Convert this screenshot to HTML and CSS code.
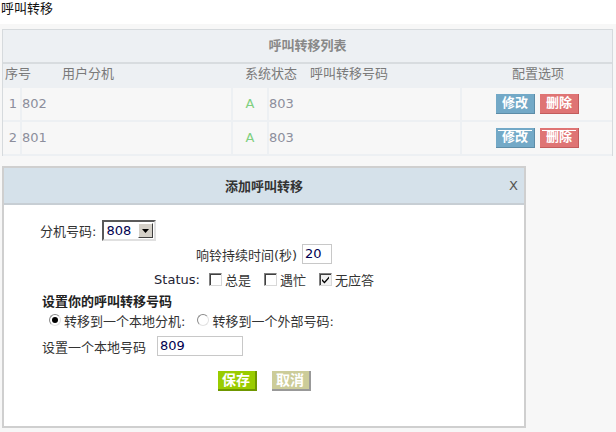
FILE: index.html
```html
<!DOCTYPE html>
<html>
<head>
<meta charset="utf-8">
<title>呼叫转移</title>
<link rel="stylesheet" href="styles.css">
</head>
<body>
<div class="page-title">呼叫转移</div>
<div class="main">
  <div class="list">
    <div class="list-title">呼叫转移列表</div>
    <div class="list-head">
      <span class="h-idx">序号</span>
      <span class="h-ext">用户分机</span>
      <span class="h-st">系统状态</span>
      <span class="h-num">呼叫转移号码</span>
      <span class="h-opt">配置选项</span>
    </div>
    <div class="row">
      <div class="c c-idx">1</div>
      <div class="c c-ext">802</div>
      <div class="c c-st">A</div>
      <div class="c c-num">803</div>
      <div class="c c-opt"><span class="btn btn-edit">修改</span><span class="btn btn-del">删除</span></div>
    </div>
    <div class="row row-alt">
      <div class="c c-idx">2</div>
      <div class="c c-ext">801</div>
      <div class="c c-st">A</div>
      <div class="c c-num">803</div>
      <div class="c c-opt"><span class="btn btn-edit">修改</span><span class="btn btn-del">删除</span></div>
    </div>
  </div>

  <div class="dialog">
    <div class="dlg-head">
      <span class="dlg-title">添加呼叫转移</span>
      <span class="dlg-close">X</span>
    </div>
    <div class="dlg-body">
      <div class="f-row f-ext">
        <span class="lbl">分机号码:</span>
        <span class="select"><span class="sel-val">808</span><span class="sel-btn"><svg width="7" height="4" viewBox="0 0 7 4"><path d="M0 0H7L3.5 4Z" fill="#000"/></svg></span></span>
      </div>
      <div class="f-row f-center f-ring">
        <span class="lbl">响铃持续时间(秒)</span>
        <span class="input in-ring">20</span>
      </div>
      <div class="f-row f-center f-status">
        <span class="lbl">Status:</span>
        <span class="cb"></span><span class="cb-lbl">总是</span>
        <span class="cb"></span><span class="cb-lbl">遇忙</span>
        <span class="cb checked"><svg width="9" height="9" viewBox="0 0 9 9"><path d="M1 4L3.5 6.5L8 1.5V3.5L3.5 8.5L1 6Z" fill="#000"/></svg></span><span class="cb-lbl">无应答</span>
      </div>
      <div class="f-row f-heading">设置你的呼叫转移号码</div>
      <div class="f-row f-radio">
        <span class="rd on"></span><span class="rd-lbl">转移到一个本地分机:</span>
        <span class="rd"></span><span class="rd-lbl">转移到一个外部号码:</span>
      </div>
      <div class="f-row f-local">
        <span class="lbl">设置一个本地号码</span>
        <span class="input in-local">809</span>
      </div>
      <div class="f-row f-center f-btns">
        <span class="sbtn save">保存</span>
        <span class="sbtn cancel">取消</span>
      </div>
    </div>
  </div>
</div>
</body>
</html>
```

FILE: styles.css
```css
html, body {
  margin: 0;
  padding: 0;
  background: #f7f7f7;
}
body {
  font-family: "DejaVu Sans", "Noto Sans CJK SC", sans-serif;
  font-size: 13px;
  color: #333;
  height: 432px;
  overflow: hidden;
}
.page-title {
  background: #fff;
  height: 24px;
  line-height: 18px;
  padding-left: 1px;
  color: #111;
}
.main {
  padding: 5px 3px 0 2px;
}
.list {
  border-top: 1px solid #d6dadd;
  border-left: 1px solid #d6dadd;
  border-right: 1px solid #d6dadd;
  background: #edf0f3;
}
.list-title {
  height: 32px;
  line-height: 32px;
  text-align: center;
  font-weight: bold;
  color: #888;
  border-bottom: 2px solid #d8dcdf;
}
.list-head {
  display: flex;
  height: 24px;
  line-height: 20px;
  color: #7a7a7a;
  padding-left: 2px;
}
.h-idx { width: 57px; }
.h-ext { width: 183px; }
.h-st { width: 65px; }
.h-num { width: 202px; }
.h-opt { width: 60px; }
.row {
  display: grid;
  grid-template-columns: 17px 209px 34px 191px 1fr;
  column-gap: 2px;
  background: #edf0f3;
  padding-bottom: 2px;
  height: 32px;
}
.c {
  background: #f7f7f7;
  line-height: 32px;
  color: #8c8e9c;
}
.c-idx { text-align: center; padding-left: 3px; }
.c-st { text-align: center; color: #7fcf7f; }
.c-opt {
  display: flex;
  justify-content: center;
  align-items: center;
  gap: 5px;
  padding-left: 1px;
}
.btn {
  position: relative;
  display: inline-block;
  width: 38px;
  height: 19px;
  line-height: 18px;
  text-align: center;
  color: #fff;
  font-weight: bold;
  font-size: 13px;
}
.btn-edit {
  background: #73a9c7;
  border-right: 1px solid #5d8ca7;
  border-bottom: 1px solid #5d8ca7;
}
.btn-del {
  background: #df7474;
  border-right: 1px solid #c25c5c;
  border-bottom: 1px solid #c25c5c;
}
.row-alt .btn::before {
  content: "";
  position: absolute;
  left: 2px;
  right: 2px;
  top: 2px;
  height: 1px;
  background: #fff;
}

.dialog {
  margin-top: 10px;
  width: 520px;
  height: 258px;
  border: 2px solid #cfcfcf;
  background: #fff;
}
.dlg-head {
  display: flex;
  align-items: center;
  height: 35px;
  background: #d5e1ea;
  border-bottom: 2px solid #c7ced4;
  position: relative;
}
.dlg-title {
  flex: 1;
  text-align: center;
  font-weight: bold;
  color: #333;
}
.dlg-close {
  position: absolute;
  right: 6px;
  top: 10px;
  color: #555;
  font-size: 13px;
}
.dlg-body {
  padding: 15px 0 0 36px;
}
.f-row {
  display: flex;
  align-items: center;
  white-space: nowrap;
}
.f-center {
  justify-content: center;
  padding-right: 36px;
}
.f-ext {
  height: 21px;
}
.select {
  display: inline-flex;
  align-items: center;
  margin-left: 6px;
  width: 50px;
  height: 17px;
  border-top: 2px solid #5a5a5a;
  border-left: 2px solid #5a5a5a;
  border-right: 2px solid #e0e0e0;
  border-bottom: 2px solid #e0e0e0;
  background: #fff;
}
.sel-val {
  padding-left: 2px;
  color: #000050;
  flex: 1;
  line-height: 17px;
}
.sel-btn {
  width: 15px;
  height: 15px;
  margin-right: 1px;
  background: #d4d0c8;
  border-top: 1px solid #fff;
  border-left: 1px solid #fff;
  border-right: 1px solid #404040;
  border-bottom: 1px solid #404040;
  display: flex;
  align-items: center;
  justify-content: center;
  box-sizing: border-box;
}
.f-ring {
  margin-top: 3px;
  height: 20px;
}
.input {
  display: inline-block;
  box-sizing: border-box;
  height: 20px;
  border: 1px solid #c8c8c8;
  color: #000050;
  line-height: 18px;
  padding-left: 2px;
  background: #fff;
}
.in-ring {
  width: 30px;
  margin-left: 5px;
}
.f-status {
  margin-top: 7px;
  height: 16px;
}
.f-status .lbl {
  color: #223;
  margin-right: 9px;
}
.cb {
  display: inline-flex;
  align-items: center;
  justify-content: center;
  box-sizing: border-box;
  width: 13px;
  height: 13px;
  border-top: 1px solid #808080;
  border-left: 1px solid #808080;
  border-right: 1px solid #d8d8d8;
  border-bottom: 1px solid #d8d8d8;
  background: #fff;
  box-shadow: inset 1px 1px 0 #404040;
}
.cb.checked {
  background: #f2f2f2;
}
.cb-lbl {
  margin-left: 3px;
  margin-right: 13px;
}
.cb-lbl:last-child {
  margin-right: 0;
}
.f-heading {
  margin-top: 4px;
  height: 18px;
  font-weight: bold;
  color: #222;
  padding-left: 2px;
}
.f-radio {
  margin-top: 3px;
  height: 16px;
  padding-left: 9px;
}
.rd {
  display: inline-block;
  box-sizing: border-box;
  width: 12px;
  height: 12px;
  border-radius: 50%;
  border: 1px solid #8a8a8a;
  border-right-color: #e2e2e2;
  border-bottom-color: #e2e2e2;
  background: #fff;
  position: relative;
}
.rd.on::after {
  content: "";
  position: absolute;
  left: 2px;
  top: 2px;
  width: 6px;
  height: 6px;
  border-radius: 50%;
  background: #000;
}
.rd-lbl {
  margin-left: 3px;
  margin-right: 12px;
}
.f-local {
  margin-top: 8px;
  height: 20px;
  padding-left: 2px;
}
.in-local {
  width: 86px;
  margin-left: 11px;
}
.f-btns {
  margin-top: 15px;
  gap: 15px;
}
.sbtn {
  display: inline-block;
  width: 37px;
  height: 18px;
  line-height: 18px;
  text-align: center;
  color: #fff;
  font-weight: bold;
  font-size: 14px;
}
.save {
  background: #99cc00;
  border-right: 2px solid #6f9700;
  border-bottom: 2px solid #6f9700;
}
.cancel {
  background: #cccc99;
  border-right: 2px solid #999;
  border-bottom: 2px solid #999;
}
```
